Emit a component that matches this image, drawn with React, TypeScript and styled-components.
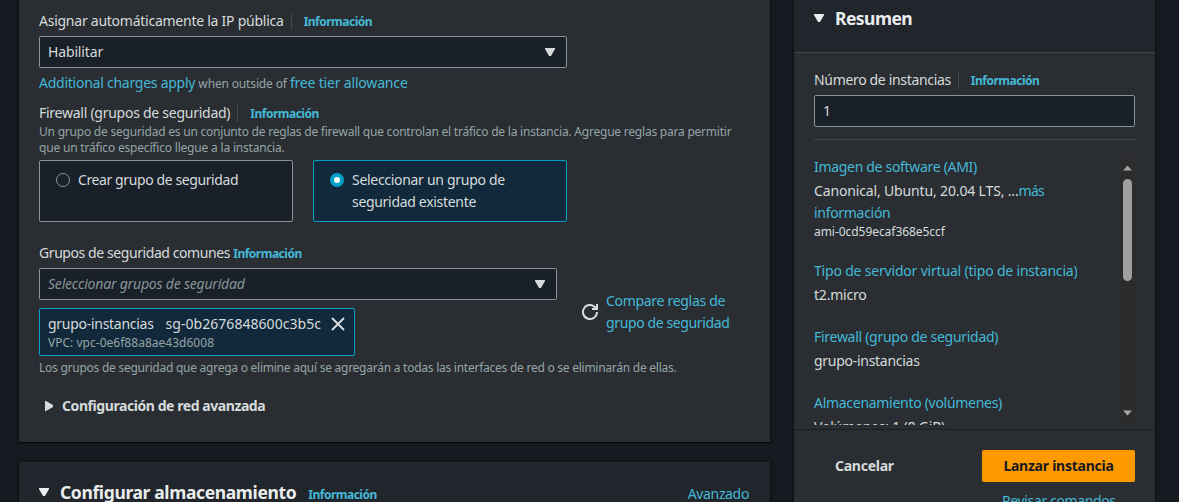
import React from 'react';
import styled, { createGlobalStyle, css } from 'styled-components';

const GlobalStyle = createGlobalStyle`
  * { box-sizing: border-box; }
  html, body { margin: 0; height: 100%; overflow: hidden; background: #16191f; }
  body {
    font-family: "Noto Sans", "Open Sans", sans-serif;
    font-size: 14px;
    line-height: 22px;
    color: #d5dbdb;
  }
`;

const Page = styled.div`
  display: flex;
  align-items: flex-start;
  gap: 24px;
  height: 502px;
  padding-left: 19px;
  overflow: hidden;
`;

const MainColumn = styled.main`
  display: flex;
  flex-direction: column;
  gap: 20px;
  width: 751px;
`;

const cardFrame = css`
  background: #2a2e33;
  box-shadow: 0 1px 1px 0 rgba(0, 0, 0, 0.6), 1px 0 1px 0 rgba(0, 0, 0, 0.3), -1px 0 1px 0 rgba(0, 0, 0, 0.3);
`;

const Card = styled.section`
  ${cardFrame}
  height: 442px;
  padding: 10px 20px 0;
`;

const StorageHeader = styled.header`
  ${cardFrame}
  display: flex;
  align-items: center;
  height: 60px;
  padding: 0 21px 1px 20px;
  background: #21252c;
  border-top: 1px solid #2a2e33;
`;

const Text = styled.span<{ $ls?: number }>`
  white-space: nowrap;
  letter-spacing: ${p => p.$ls ?? -0.25}px;
`;

const Link = styled(Text)`
  color: #44b9d6;
`;

const InfoLink = styled(Link)`
  margin-top: 2px;
  font-size: 12px;
  font-weight: 700;
  letter-spacing: -0.5px;
`;

const LabelRow = styled.div<{ $top?: number }>`
  display: flex;
  align-items: center;
  height: 22px;
  margin-top: ${p => p.$top ?? 0}px;
`;

const Separator = styled.i`
  width: 1px;
  height: 18px;
  margin: 0 12px 0 7px;
  background: #414750;
`;

const Field = styled.div<{ $placeholder?: boolean }>`
  display: flex;
  align-items: center;
  justify-content: space-between;
  height: 32px;
  margin-top: 4px;
  padding: 0 11px 0 8px;
  background: #1a2029;
  border: 1px solid #879596;
  border-radius: 2px;
  color: ${p => (p.$placeholder ? '#879596' : '#d5dbdb')};
  font-style: ${p => (p.$placeholder ? 'italic' : 'normal')};
`;

const FormColumn = styled.div<{ $width: number }>`
  width: ${p => p.$width}px;
`;

const Hint = styled.p`
  height: 22px;
  margin: 4px 0 0;
  color: #95a5a6;
  font-size: 12px;
  line-height: 22px;
  white-space: nowrap;
`;

const BodyLink = styled(Link)`
  font-size: 14px;
`;

const Description = styled.p<{ $top?: number }>`
  display: flex;
  flex-direction: column;
  margin: ${p => p.$top ?? 0}px 0 0;
  color: #95a5a6;
  font-size: 12px;
  line-height: 16px;
`;

const Tiles = styled.div`
  display: grid;
  grid-template-columns: 1fr 1fr;
  gap: 20px;
  width: 528px;
  margin-top: 4px;
`;

const Tile = styled.div<{ $selected?: boolean }>`
  display: flex;
  gap: 8px;
  height: 62px;
  padding: 8px 16px;
  border: 1px solid ${p => (p.$selected ? '#00a1c9' : '#879596')};
  border-radius: 2px;
  background: ${p => (p.$selected ? '#12293b' : '#1a2029')};
`;

const Radio = styled.i<{ $selected?: boolean }>`
  flex: none;
  width: 14px;
  height: 14px;
  margin-top: 4px;
  border: ${p => (p.$selected ? '4px solid #00a1c9' : '1px solid #879596')};
  border-radius: 50%;
  background: ${p => (p.$selected ? '#fff' : '#1a2029')};
`;

const Lines = styled.div`
  display: flex;
  flex-direction: column;
`;

const GroupRow = styled.div`
  display: flex;
  gap: 25px;
  margin-top: 20px;
`;

const Compare = styled.div`
  display: flex;
  align-items: center;
  gap: 8px;
  height: 44px;
  margin-top: 48px;
`;

const Token = styled.div`
  display: flex;
  justify-content: space-between;
  width: 316px;
  height: 48px;
  margin-top: 8px;
  padding: 4px 9px 0 8px;
  border: 1px solid #00a1c9;
  border-radius: 2px;
  background: #12293b;
`;

const TokenNames = styled.div`
  display: flex;
  gap: 12px;
`;

const TokenVpc = styled(Text)`
  color: #95a5a6;
  font-size: 12px;
  line-height: 16px;
`;

const CloseIcon = styled.svg`
  margin-top: 4px;
`;

const Expander = styled.div`
  display: flex;
  align-items: center;
  gap: 9px;
  margin-top: 19px;
  padding-left: 6px;
  font-weight: 700;
`;

const Title = styled(Text)`
  margin-left: 11px;
  color: #eaeded;
  font-size: 17.5px;
  font-weight: 700;
`;

const StorageInfo = styled(InfoLink)`
  margin: 5px auto 0 12px;
`;

const AdvancedLink = styled(Link)`
  margin-top: 4px;
`;

const Summary = styled.aside`
  ${cardFrame}
  display: flex;
  flex-direction: column;
  width: 361px;
  height: 502px;
`;

const SummaryHeader = styled.header`
  display: flex;
  align-items: center;
  height: 53px;
  padding: 0 20px 16px;
  background: #21252c;
  border-bottom: 1px solid #414750;
`;

const SummaryBody = styled.div`
  height: 376px;
  padding: 16px 20px 0;
`;

const ScrollArea = styled.div`
  display: flex;
  justify-content: space-between;
  height: 286px;
  margin-top: 12px;
  padding-top: 16px;
  border-top: 1px solid #414750;
  overflow: hidden;
`;

const Details = styled.dl`
  display: flex;
  flex-direction: column;
  gap: 20px;
  height: 269px;
  margin: 0;
  overflow: hidden;
`;

const Detail = styled.div`
  display: flex;
  flex-direction: column;
  gap: 2px;
`;

const AmiId = styled(Text)`
  color: #d5dbdb;
  font-size: 12px;
  line-height: 16px;
`;

const Scrollbar = styled.div`
  display: flex;
  flex-direction: column;
  align-items: center;
  width: 15px;
  height: 269px;
  padding: 9px 0;
  background: #2c2c2c;
`;

const Thumb = styled.div`
  width: 9px;
  height: 102px;
  margin: 8px 0 auto;
  border-radius: 4.5px;
  background: #9f9f9f;
`;

const SummaryFooter = styled.footer`
  display: grid;
  grid-template-columns: auto 153px;
  grid-template-rows: 32px 22px;
  row-gap: 8px;
  height: 73px;
  padding: 20px 20px 0;
  border-top: 1px solid #1a1d22;
  overflow: hidden;
`;

const buttonText = css`
  display: flex;
  align-items: center;
  font-weight: 700;
`;

const CancelButton = styled.div`
  ${buttonText}
  padding-left: 21px;
`;

const LaunchButton = styled.div`
  ${buttonText}
  justify-content: center;
  border-radius: 2px;
  background: #ff9900;
  color: #16191f;
`;

const ReviewLink = styled(Link)`
  grid-column: 2;
  padding-left: 20px;
`;

const Caret = ({ color = '#d5dbdb' }: { color?: string }) => (
  <svg width="10" height="8" viewBox="0 0 10 8">
    <path d="M0 0h10v1L6 8H4L0 1z" fill={color} />
  </svg>
);

const CaretRight = () => (
  <svg width="8" height="10" viewBox="0 0 8 10">
    <path d="M0 0h1l7 4v2l-7 4H0z" fill="#d5dbdb" />
  </svg>
);

const Refresh = () => (
  <svg width="16" height="16" viewBox="0 0 16 16" fill="none" stroke="#d5dbdb" strokeWidth="2">
    <path d="M15 8a7 7 0 1 1-2.2-5.1L15 5" />
    <path d="M15 0v5h-5" />
  </svg>
);

const ScrollArrow = ({ down = false }: { down?: boolean }) => (
  <svg width="9" height="6" viewBox="0 0 9 6">
    <path d={down ? 'M0 0.5h9L4.5 5.5z' : 'M0 5.5h9L4.5 0.5z'} fill="#a5a5a5" />
  </svg>
);

export default function App() {
  return (
    <>
      <GlobalStyle />
      <Page>
        <MainColumn>
          <Card>
            <FormColumn $width={528}>
              <LabelRow>
                <Text>Asignar automáticamente la IP pública</Text>
                <Separator />
                <InfoLink>Información</InfoLink>
              </LabelRow>
              <Field>
                <Text $ls={-0.15}>Habilitar</Text>
                <Caret />
              </Field>
            </FormColumn>
            <Hint>
              <BodyLink>Additional charges apply</BodyLink> <Text $ls={-0.15}>when outside of</Text>{' '}
              <BodyLink $ls={-0.18}>free tier allowance</BodyLink>
            </Hint>
            <LabelRow $top={8}>
              <Text $ls={-0.26}>Firewall (grupos de seguridad)</Text>
              <Separator />
              <InfoLink>Información</InfoLink>
            </LabelRow>
            <Description>
              <Text $ls={-0.22}>Un grupo de seguridad es un conjunto de reglas de firewall que controlan el tráfico de la instancia. Agregue reglas para permitir</Text>
              <Text $ls={-0.19}>que un tráfico específico llegue a la instancia.</Text>
            </Description>
            <Tiles>
              <Tile>
                <Radio />
                <Text $ls={-0.4}>Crear grupo de seguridad</Text>
              </Tile>
              <Tile $selected>
                <Radio $selected />
                <Lines>
                  <Text $ls={-0.3}>Seleccionar un grupo de</Text>
                  <Text $ls={-0.31}>seguridad existente</Text>
                </Lines>
              </Tile>
            </Tiles>
            <GroupRow>
              <FormColumn $width={518}>
                <LabelRow>
                  <Text $ls={-0.42}>Grupos de seguridad comunes&nbsp;</Text>
                  <InfoLink>Información</InfoLink>
                </LabelRow>
                <Field $placeholder>
                  <Text $ls={-0.2}>Seleccionar grupos de seguridad</Text>
                  <Caret />
                </Field>
                <Token>
                  <Lines>
                    <TokenNames>
                      <Text $ls={-0.28}>grupo-instancias</Text>
                      <Text $ls={0.04}>sg-0b2676848600c3b5c</Text>
                    </TokenNames>
                    <TokenVpc $ls={0.02}>VPC: vpc-0e6f88a8ae43d6008</TokenVpc>
                  </Lines>
                  <CloseIcon width="14" height="14" viewBox="0 0 14 14" stroke="#d5dbdb" strokeWidth="2">
                    <path d="M1 1l12 12M13 1L1 13" />
                  </CloseIcon>
                </Token>
              </FormColumn>
              <Compare>
                <Refresh />
                <Lines>
                  <Link $ls={-0.3}>Compare reglas de</Link>
                  <Link $ls={-0.38}>grupo de seguridad</Link>
                </Lines>
              </Compare>
            </GroupRow>
            <Description $top={4}>
              <Text>Los grupos de seguridad que agrega o elimine aquí se agregarán a todas las interfaces de red o se eliminarán de ellas.</Text>
            </Description>
            <Expander>
              <CaretRight />
              <Text $ls={-0.43}>Configuración de red avanzada</Text>
            </Expander>
          </Card>
          <StorageHeader>
            <Caret color="#eaeded" />
            <Title $ls={-0.37}>Configurar almacenamiento</Title>
            <StorageInfo>Información</StorageInfo>
            <AdvancedLink $ls={-0.35}>Avanzado</AdvancedLink>
          </StorageHeader>
        </MainColumn>
        <Summary>
          <SummaryHeader>
            <Caret color="#eaeded" />
            <Title $ls={-0.55}>Resumen</Title>
          </SummaryHeader>
          <SummaryBody>
            <LabelRow>
              <Text $ls={-0.33}>Número de instancias</Text>
              <Separator />
              <InfoLink>Información</InfoLink>
            </LabelRow>
            <Field>
              <Text>1</Text>
            </Field>
            <ScrollArea>
              <Details>
                <Detail>
                  <Link $ls={-0.31}>Imagen de software (AMI)</Link>
                  <Lines>
                    <Text $ls={-0.15}>Canonical, Ubuntu, 20.04 LTS, ...<Link $ls={-0.7}>más</Link></Text>
                    <Link $ls={-0.3}>información</Link>
                    <AmiId $ls={-0.05}>ami-0cd59ecaf368e5ccf</AmiId>
                  </Lines>
                </Detail>
                <Detail>
                  <Link $ls={-0.19}>Tipo de servidor virtual (tipo de instancia)</Link>
                  <Text $ls={-0.2}>t2.micro</Text>
                </Detail>
                <Detail>
                  <Link $ls={-0.28}>Firewall (grupo de seguridad)</Link>
                  <Text $ls={-0.28}>grupo-instancias</Text>
                </Detail>
                <Detail>
                  <Link $ls={-0.29}>Almacenamiento (volúmenes)</Link>
                  <Text $ls={-0.2}>Volúmenes: 1 (8 GiB)</Text>
                </Detail>
              </Details>
              <Scrollbar>
                <ScrollArrow />
                <Thumb />
                <ScrollArrow down />
              </Scrollbar>
            </ScrollArea>
          </SummaryBody>
          <SummaryFooter>
            <CancelButton><Text>Cancelar</Text></CancelButton>
            <LaunchButton><Text>Lanzar instancia</Text></LaunchButton>
            <ReviewLink $ls={-0.37}>Revisar comandos</ReviewLink>
          </SummaryFooter>
        </Summary>
      </Page>
    </>
  );
}
